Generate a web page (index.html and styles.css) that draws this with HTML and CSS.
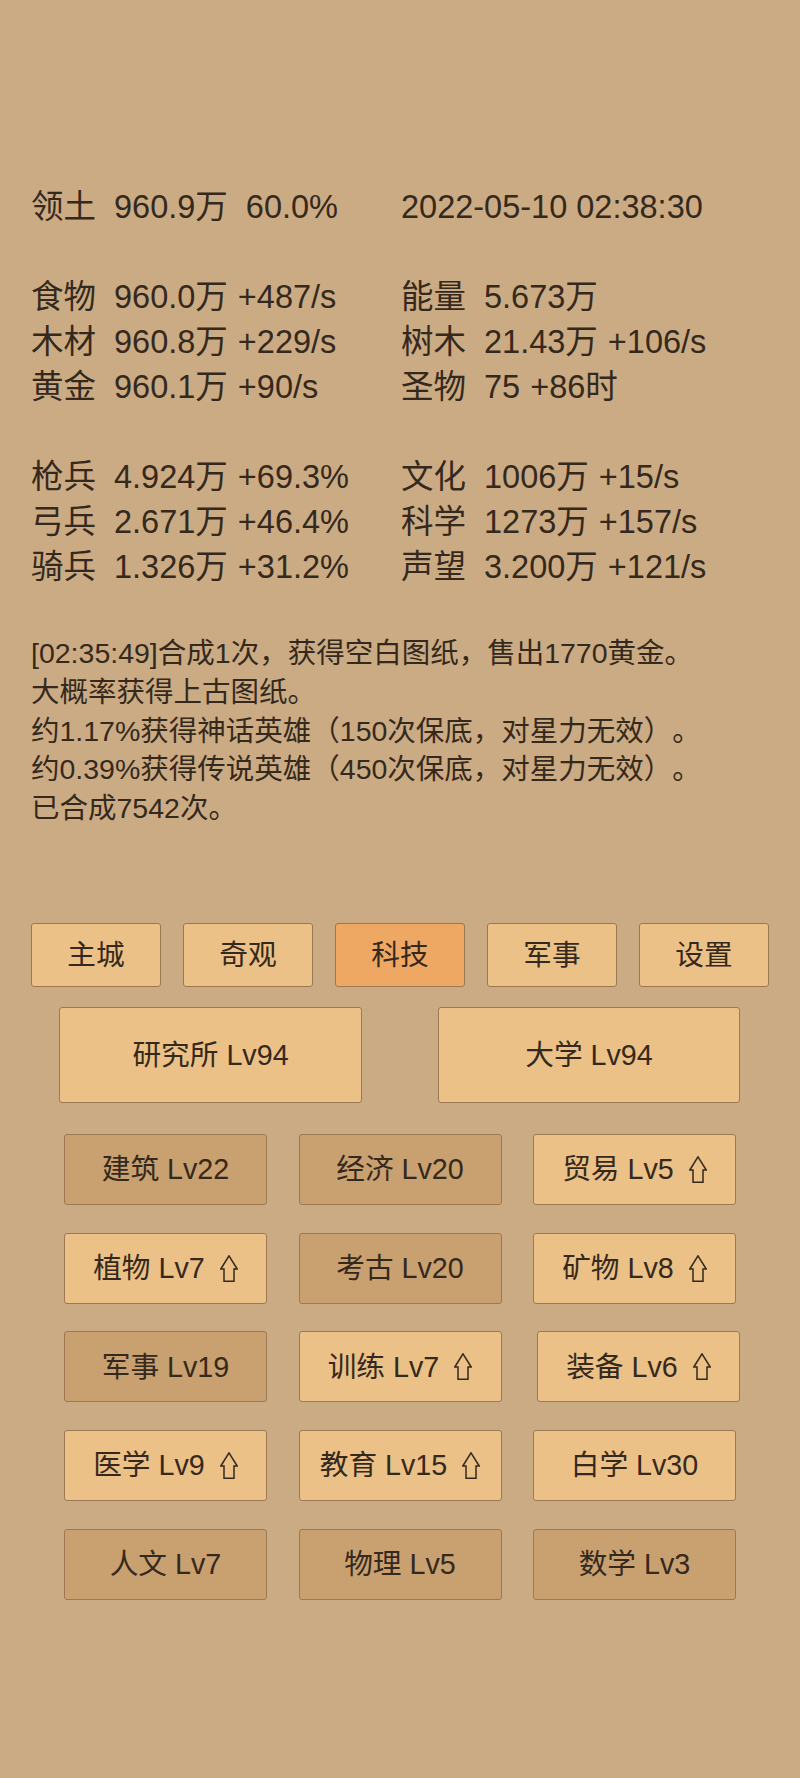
FILE: index.html
```html
<!DOCTYPE html>
<html lang="zh-CN">
<head>
<meta charset="utf-8">
<title>科技</title>
<link rel="stylesheet" href="styles.css">
</head>
<body>
<div class="page">
  <section class="stats">
    <div class="row">
      <div class="cell"><span class="k">领土</span><span class="v">960.9万</span><span class="x x-wide">60.0%</span></div>
      <div class="cell">2022-05-10 02:38:30</div>
    </div>
    <div class="row blank"></div>
    <div class="row">
      <div class="cell"><span class="k">食物</span><span class="v">960.0万</span><span class="x">+487/s</span></div>
      <div class="cell"><span class="k">能量</span><span class="v">5.673万</span></div>
    </div>
    <div class="row">
      <div class="cell"><span class="k">木材</span><span class="v">960.8万</span><span class="x">+229/s</span></div>
      <div class="cell"><span class="k">树木</span><span class="v">21.43万</span><span class="x">+106/s</span></div>
    </div>
    <div class="row">
      <div class="cell"><span class="k">黄金</span><span class="v">960.1万</span><span class="x">+90/s</span></div>
      <div class="cell"><span class="k">圣物</span><span class="v">75</span><span class="x">+86时</span></div>
    </div>
    <div class="row blank"></div>
    <div class="row">
      <div class="cell"><span class="k">枪兵</span><span class="v">4.924万</span><span class="x">+69.3%</span></div>
      <div class="cell"><span class="k">文化</span><span class="v">1006万</span><span class="x">+15/s</span></div>
    </div>
    <div class="row">
      <div class="cell"><span class="k">弓兵</span><span class="v">2.671万</span><span class="x">+46.4%</span></div>
      <div class="cell"><span class="k">科学</span><span class="v">1273万</span><span class="x">+157/s</span></div>
    </div>
    <div class="row">
      <div class="cell"><span class="k">骑兵</span><span class="v">1.326万</span><span class="x">+31.2%</span></div>
      <div class="cell"><span class="k">声望</span><span class="v">3.200万</span><span class="x">+121/s</span></div>
    </div>
  </section>

  <section class="log">
    <p>[02:35:49]合成1次，获得空白图纸，售出1770黄金。</p>
    <p>大概率获得上古图纸。</p>
    <p>约1.17%获得神话英雄（150次保底，对星力无效）。</p>
    <p>约0.39%获得传说英雄（450次保底，对星力无效）。</p>
    <p>已合成7542次。</p>
  </section>

  <nav class="tabs">
    <button class="btn tab">主城</button>
    <button class="btn tab">奇观</button>
    <button class="btn tab active">科技</button>
    <button class="btn tab">军事</button>
    <button class="btn tab">设置</button>
  </nav>

  <div class="big-row">
    <button class="btn big">研究所 Lv94</button>
    <button class="btn big big-right">大学 Lv94</button>
  </div>

  <div class="grid">
    <button class="btn cell-btn dark"><span>建筑 Lv22</span></button>
    <button class="btn cell-btn dark"><span>经济 Lv20</span></button>
    <button class="btn cell-btn"><span>贸易 Lv5</span><svg class="up" viewBox="0 0 18 27"><path d="M9 0.8 L17.2 14 L14 14 L14 26.2 L4 26.2 L4 14 L0.8 14 Z"/></svg></button>

    <button class="btn cell-btn"><span>植物 Lv7</span><svg class="up" viewBox="0 0 18 27"><path d="M9 0.8 L17.2 14 L14 14 L14 26.2 L4 26.2 L4 14 L0.8 14 Z"/></svg></button>
    <button class="btn cell-btn dark"><span>考古 Lv20</span></button>
    <button class="btn cell-btn"><span>矿物 Lv8</span><svg class="up" viewBox="0 0 18 27"><path d="M9 0.8 L17.2 14 L14 14 L14 26.2 L4 26.2 L4 14 L0.8 14 Z"/></svg></button>

    <button class="btn cell-btn dark"><span>军事 Lv19</span></button>
    <button class="btn cell-btn"><span>训练 Lv7</span><svg class="up" viewBox="0 0 18 27"><path d="M9 0.8 L17.2 14 L14 14 L14 26.2 L4 26.2 L4 14 L0.8 14 Z"/></svg></button>
    <button class="btn cell-btn shifted"><span>装备 Lv6</span><svg class="up" viewBox="0 0 18 27"><path d="M9 0.8 L17.2 14 L14 14 L14 26.2 L4 26.2 L4 14 L0.8 14 Z"/></svg></button>

    <button class="btn cell-btn"><span>医学 Lv9</span><svg class="up" viewBox="0 0 18 27"><path d="M9 0.8 L17.2 14 L14 14 L14 26.2 L4 26.2 L4 14 L0.8 14 Z"/></svg></button>
    <button class="btn cell-btn"><span>教育 Lv15</span><svg class="up" viewBox="0 0 18 27"><path d="M9 0.8 L17.2 14 L14 14 L14 26.2 L4 26.2 L4 14 L0.8 14 Z"/></svg></button>
    <button class="btn cell-btn"><span>白学 Lv30</span></button>

    <button class="btn cell-btn dark"><span>人文 Lv7</span></button>
    <button class="btn cell-btn dark"><span>物理 Lv5</span></button>
    <button class="btn cell-btn dark"><span>数学 Lv3</span></button>
  </div>
</div>
</body>
</html>
```

FILE: styles.css
```css
html {
  background: #cbab84;
}

body {
  margin: 0;
  background: #cbab84;
  color: #35291d;
  font-family: "Liberation Sans", "Noto Sans CJK SC", sans-serif;
  text-spacing-trim: space-all;
}

.page {
  width: 800px;
  min-height: 1778px;
  padding-top: 185px;
  box-sizing: border-box;
}

/* ---------- stats ---------- */
.stats {
  padding-left: 31px;
  font-size: 32.5px;
}

.row {
  display: grid;
  grid-template-columns: 370px 1fr;
  height: 45px;
  line-height: 45px;
  white-space: nowrap;
}

.cell {
  display: flex;
}

.k {
  width: 2em;
  margin-right: 18px;
}

.x {
  margin-left: 10px;
}

.x-wide {
  margin-left: 18px;
}

/* ---------- log ---------- */
.log {
  margin-top: 44px;
  padding-left: 31px;
  font-size: 28.5px;
  line-height: 38.8px;
}

.log p {
  margin: 0;
  white-space: nowrap;
}

/* ---------- buttons ---------- */
.btn {
  font-family: "Liberation Sans", "Noto Sans CJK SC", sans-serif;
  font-size: 28.7px;
  color: #35291d;
  border: 1px solid #9c7952;
  border-radius: 3px;
  background: #ebc187;
  padding: 0;
  margin: 0;
  box-sizing: border-box;
  display: flex;
  align-items: center;
  justify-content: center;
  line-height: 1;
  text-spacing-trim: space-all;
}

.tabs {
  margin-top: 95px;
  padding: 0 31px;
  display: flex;
  justify-content: space-between;
}

.tab {
  width: 130px;
  height: 64px;
}

.tab.active {
  background: #eea863;
}

.big-row {
  margin-top: 20px;
  padding-left: 59px;
  display: flex;
  gap: 76px;
}

.big {
  width: 303px;
  height: 96px;
}

.big-right {
  width: 302px;
}

.grid {
  margin-top: 31px;
  padding-left: 64px;
  display: grid;
  grid-template-columns: 203px 203px 203px;
  column-gap: 31.5px;
  row-gap: 27.75px;
}

.cell-btn {
  width: 203px;
  height: 71px;
}

.cell-btn.dark {
  background: #c9a070;
}

.cell-btn.shifted {
  margin-left: 4px;
}

.up {
  width: 18px;
  height: 27px;
  margin-left: 15px;
  flex: none;
}

.up path {
  fill: none;
  stroke: #35291d;
  stroke-width: 1.5;
  stroke-linejoin: miter;
}
```
